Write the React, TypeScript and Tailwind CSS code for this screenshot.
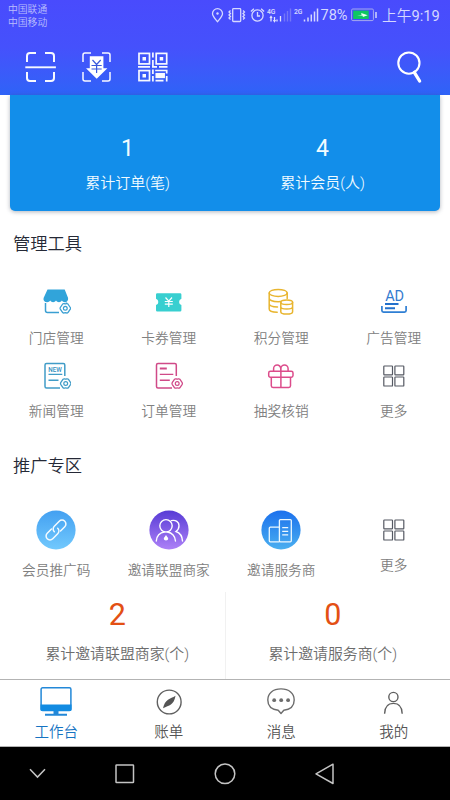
import React from "react";

type IconProps = { children: React.ReactNode; w: number; h: number; className?: string };

function Icon({ children, w, h, className = "" }: IconProps) {
  return (
    <svg width={w} height={h} viewBox={`0 0 ${w} ${h}`} fill="none" className={`block shrink-0 ${className}`}>
      {children}
    </svg>
  );
}

/* Cog badge shown on the lower right of the management icons */
function Cog({ x, y, color }: { x: number; y: number; color: string }) {
  return (
    <g transform={`translate(${x} ${y})`} stroke={color}>
      <path
        d="M-2.6-4.3Q-2-4.9-1-4.6Q0-4.3 1-4.6Q2-4.9 2.6-4.3L5-.8Q5.4 0 5 .8L2.6 4.3Q2 4.9 1 4.6Q0 4.3-1 4.6Q-2 4.9-2.6 4.3L-5 .8Q-5.4 0-5-.8Z"
        fill="#fff"
        strokeWidth="1.3"
        strokeLinejoin="round"
      />
      <circle r="1.9" strokeWidth="1.2" />
    </g>
  );
}

const StoreIcon = () => (
  <Icon w={30} h={30}>
    <path d="M4.5 15v7.5a2 2 0 0 0 2 2H18M25.5 14.5v3" stroke="#3a9fd2" strokeWidth="1.5" />
    <path d="M6.500 1.600h17.200l3.400 8.400c.3 2.600-1.200 4.200-3.200 4.200-1.400 0-2.200-.7-3-1.700-.8 1-1.700 1.700-2.900 1.700s-2.200-.7-3-1.700c-.8 1-1.700 1.700-2.900 1.700s-2.100-.7-2.900-1.700c-.8 1-1.700 1.700-3 1.700C3.500 14.200 2 12.500 2.600 10z" fill="#31a4da" />
    <Cog x={24.3} y={20.3} color="#3a9fd2" />
  </Icon>
);

const CouponIcon = () => (
  <Icon w={30} h={30}>
    <path d="M3.300 5.200h22.800a1.300 1.300 0 0 1 1.300 1.300v4.300a3.300 3.300 0 0 0 0 6.300v5.200a1.300 1.300 0 0 1-1.300 1.300H3.300A1.300 1.300 0 0 1 2 22.300v-5.200a3.300 3.300 0 0 0 0-6.300V6.500a1.300 1.300 0 0 1 1.300-1.300z" fill="#38cfd0" />
    <path d="M11.500 9.500l3.300 3.600L18 9.500M14.800 13.100v6M10.800 13.500h8M10.800 16.100h8" stroke="#fff" strokeWidth="1.200" />
  </Icon>
);

const CoinsIcon = () => (
  <Icon w={30} h={30}>
    <g stroke="#e8b52f" strokeWidth="1.500" strokeLinecap="round">
      <ellipse cx="12.200" cy="4.900" rx="9" ry="3.500" />
      <path d="M3.200 5v16c0 2 3.600 3.200 8 3.300M21.200 5v5.500M3.200 10.300c0 2 4 3.400 9 3.400 1 0 1.700 0 2.500-.1M3.200 15.800c0 1.900 3.500 3.100 8.300 3.200" />
      <ellipse cx="20.700" cy="14.200" rx="5.900" ry="2.300" />
      <path d="M14.800 14.200v9.500c0 1.300 2.600 2.400 5.900 2.400s5.900-1.100 5.900-2.400v-9.500M14.800 18.800c0 1.300 2.600 2.300 5.900 2.300s5.900-1 5.900-2.300" />
    </g>
  </Icon>
);

const AdIcon = () => (
  <Icon w={30} h={30}>
    <text x="15.700" y="12.800" textAnchor="middle" textLength="18.800" fontSize="14.500" fontWeight="400" fill="#347bcf" className="font-['Roboto']">AD</text>
    <path d="M2.900 18v4.600a1.600 1.600 0 0 0 1.600 1.600h21a1.600 1.600 0 0 0 1.600-1.600V18" stroke="#2f7fd4" strokeWidth="1.700" />
    <path d="M6 16h13.500M6 20.200h10" stroke="#2370cc" strokeWidth="2" />
  </Icon>
);

const NewsIcon = () => (
  <Icon w={30} h={30}>
    <path d="M23.800 15V4a1.500 1.500 0 0 0-1.500-1.500H5.500A1.500 1.500 0 0 0 4 4v21.500A1.500 1.500 0 0 0 5.500 27H19" stroke="#419cc7" strokeWidth="1.500" />
    <text x="14.100" y="11" textAnchor="middle" textLength="13.500" lengthAdjust="spacingAndGlyphs" fontSize="7" fontWeight="500" fill="#318fc0" className="font-['Roboto']">NEW</text>
    <path d="M7.500 13.400h13.800M7.500 19.200h10" stroke="#419cc7" strokeWidth="1.400" />
    <Cog x={24.700} y={22.500} color="#419cc7" />
  </Icon>
);

const OrderIcon = () => (
  <Icon w={30} h={30}>
    <path d="M22.300 15V4a1.500 1.500 0 0 0-1.500-1.500H4A1.500 1.500 0 0 0 2.500 4v21.500A1.500 1.500 0 0 0 4 27h14" stroke="#d04a88" strokeWidth="1.500" />
    <path d="M5.800 7.500h7" stroke="#d04a88" strokeWidth="2" />
    <path d="M5.800 13.400h13.500M5.800 19.200h10" stroke="#d04a88" strokeWidth="1.400" />
    <Cog x={23.200} y={22.500} color="#d04a88" />
  </Icon>
);

const GiftIcon = () => (
  <Icon w={30} h={30}>
    <g stroke="#dc4c8b" strokeWidth="1.500" strokeLinejoin="round">
      <rect x="2.700" y="10.300" width="24.300" height="5.900" rx="1.700" />
      <path d="M5.300 16.200v8.500a1.700 1.700 0 0 0 1.700 1.700h15.800a1.700 1.700 0 0 0 1.700-1.700v-8.500M14.900 10.300v16.100M7.600 10V7.700a3.600 3.600 0 0 1 7.200 0V10M14.900 10V7.700a3.600 3.600 0 0 1 7.200 0V10" />
    </g>
  </Icon>
);

const MoreIcon = () => (
  <Icon w={30} h={30}>
    <g stroke="#555963" strokeWidth="1.200">
      <rect x="4.800" y="5" width="8.700" height="8.900" rx=".6" />
      <rect x="15.900" y="5" width="8.900" height="8.900" rx=".6" />
      <rect x="4.800" y="16" width="8.700" height="9" rx=".6" />
      <rect x="15.900" y="16" width="8.900" height="9" rx=".6" />
    </g>
  </Icon>
);

const LinkIcon = () => (
  <Icon w={40} h={40}>
    <defs>
      <linearGradient id="link" x1="0" y1="0" x2="0" y2="1">
        <stop stopColor="#43a0f1" />
        <stop offset="1" stopColor="#72c9fd" />
      </linearGradient>
    </defs>
    <circle cx="20" cy="20" r="19.600" fill="url(#link)" />
    <g transform="rotate(-45 20 20)" stroke="#f4fbff" strokeWidth="1.500" strokeLinecap="round">
      <path d="M17.500 16.100h-6a3.900 3.900 0 0 0-3.900 3.900 3.900 3.900 0 0 0 3.900 3.900h7a3.900 3.900 0 0 0 3.900-3.900" />
      <path d="M22.500 23.900h6a3.900 3.900 0 0 0 3.900-3.900 3.900 3.900 0 0 0-3.900-3.900h-7a3.900 3.900 0 0 0-3.900 3.900" />
    </g>
  </Icon>
);

const AllianceIcon = () => (
  <Icon w={40} h={40}>
    <defs>
      <linearGradient id="alliance" x1="0" y1="0" x2="0" y2="1">
        <stop stopColor="#573bd5" />
        <stop offset="1" stopColor="#ad81f7" />
      </linearGradient>
    </defs>
    <circle cx="20" cy="20" r="19.600" fill="url(#alliance)" />
    <g stroke="#fff" strokeWidth="1.400" strokeLinecap="round">
      <circle cx="17" cy="15.800" r="6.200" />
      <path d="M7.300 31c.2-4.900 3.600-8.600 8-9M18.500 22c4.500.6 7.800 4.200 8 9M22.300 10.600c4.500-1 7.700 1.500 7.700 5.100 0 2.500-1.200 4.500-3 5.800 4 1.500 6.300 5 6.500 9.500" />
    </g>
    <path d="M17 25c.7 1.600 2.200 2.300 2.200 3.600 0 1.100-.9 2-2.200 2s-2.200-.9-2.200-2c0-1.300 1.500-2 2.200-3.600z" fill="#fff" />
  </Icon>
);

const ServiceIcon = () => (
  <Icon w={40} h={40}>
    <defs>
      <linearGradient id="service" x1="0" y1="0" x2="0" y2="1">
        <stop stopColor="#1b70ed" />
        <stop offset="1" stopColor="#4aaff0" />
      </linearGradient>
    </defs>
    <circle cx="20" cy="20" r="19.600" fill="url(#service)" />
    <g stroke="#ecf8ff" strokeWidth="1.300">
      <path d="M18.500 31.800H9.300a1 1 0 0 1-1-1V18.200a1 1 0 0 1 1-1h9.200" />
      <rect x="18.400" y="9.600" width="11.900" height="22.200" rx="1" />
      <path d="M21.200 17.600h6M21.200 21.300h6M21.200 24.800h6" />
    </g>
  </Icon>
);

function Entry({ icon, label }: { icon: React.ReactNode; label: string }) {
  return (
    <div className="flex flex-col items-center">
      {icon}
      <span className="mt-[10px] text-[13.700px] leading-5 whitespace-nowrap text-[#808080]">{label}</span>
    </div>
  );
}

function StatusBar() {
  return (
    <div className="flex h-[31px] items-start pl-2 text-[#d5d8ff]">
      <div className="w-[203px] pt-[3px] text-[9.800px] leading-[13.300px] text-[#bbbffc]">
        <div>中国联通</div>
        <div>中国移动</div>
      </div>
      <Icon w={145} h={30}>
        <g stroke="#d5d8ff" strokeWidth="1.300">
          <path d="M6.500 21.700C3.500 18 1.500 16 1.500 13.700a5 5 0 0 1 10 0c0 2.300-2 4.300-5 8z" />
          <circle cx="6.500" cy="13.500" r="1.200" fill="#d5d8ff" stroke="none" />
          <rect x="21.700" y="8.700" width="8" height="12.800" rx=".8" />
          <path d="M19.500 10.500l-1.500 1.500 1.500 1.500-1.500 1.500 1.500 1.500-1.500 1.500 1.500 1.500M32 10.500l1.500 1.500-1.500 1.500 1.500 1.500-1.500 1.500 1.500 1.500-1.500 1.500" />
          <circle cx="46.500" cy="15.500" r="5.600" />
          <path d="M46.500 12v4h2.500M39.900 11.500l3-2.800M53.100 11.500l-3-2.800" />
        </g>
        <g fill="#d5d8ff" className="font-['Roboto']">
          <text x="56" y="13.600" fontSize="7.500" fontWeight="600" textLength="8.500" lengthAdjust="spacingAndGlyphs">4G</text>
          <text x="83" y="13.600" fontSize="7.500" fontWeight="600" textLength="8.500" lengthAdjust="spacingAndGlyphs">2G</text>
          <text x="109.500" y="20" fontSize="15" fontWeight="400" textLength="27" lengthAdjust="spacingAndGlyphs">78%</text>
        </g>
        <path d="M60 17v4.500M59 18l1-1.500 1 1.500M63.500 17v4.500M62.500 20l1 1.500 1-1.500M66 19.500v2M69.500 16v5.500" stroke="#e0e2ff" strokeWidth="1.300" />
        <path d="M73.500 13.500v8M76.500 11v10.500M79.500 8.500v13" stroke="#7476f7" strokeWidth="1.400" />
        <path d="M93.500 19.500v2M97 17.500v4M100.300 14.500v7M103.500 11.500v10M106.500 8.500v13" stroke="#d5d8ff" strokeWidth="1.500" />
      </Icon>
      <Icon w={26} h={30} className="-ml-[5px]">
        <rect x=".6" y="9" width="21.800" height="11.600" rx="1.200" stroke="#a5a9ee" strokeWidth="1" />
        <rect x="2.200" y="10.600" width="15.500" height="8.400" fill="#0ec662" />
        <path d="M6 15h4.500l-.3-2 6.500 2.200-4.900 1.900v-1.300z" fill="#eafff1" />
        <path d="M25 12v6" stroke="#c9cdfd" strokeWidth="1.600" />
      </Icon>
      <span className="mt-[6px] ml-[5px] text-[14.700px] leading-5 whitespace-nowrap">
        上午<span className="font-normal">9:19</span>
      </span>
    </div>
  );
}

function Toolbar() {
  return (
    <div className="flex h-16 items-start pt-5 pl-[25px]">
      <Icon w={32} h={32}>
        <path d="M2 11V5a3 3 0 0 1 3-3h6M20 2h6a3 3 0 0 1 3 3v6M2 21v6a3 3 0 0 0 3 3h6M20 30h6a3 3 0 0 0 3-3v-6" stroke="#f7f9ff" strokeWidth="2" />
        <path d="M.3 16.300h30.600" stroke="#f7f9ff" strokeWidth="1.900" />
      </Icon>
      <Icon w={32} h={32} className="ml-[24px]">
        <path d="M2 11V4a2 2 0 0 1 2-2h6M21 2h6a2 2 0 0 1 2 2v7M2 21v7a2 2 0 0 0 2 2h6M21 30h6a2 2 0 0 0 2-2v-7" stroke="#f7f9ff" strokeWidth="1.500" />
        <path d="M8.800 5.200h13.600v12h4L15.700 27.800 5 17.200h3.800z" fill="#fff" />
        <path d="M11.500 9l4.100 4.500L19.700 9M15.600 13.500v8.500M10.500 14.500h10.200M10.500 18h10.200" stroke="#3a59dc" strokeWidth="1.200" />
      </Icon>
      <Icon w={32} h={32} className="ml-[24px]">
        <g stroke="#f7f9ff" strokeWidth="1.700">
          <rect x="2" y="2.400" width="10.500" height="10.500" />
          <rect x="19.200" y="2.400" width="10.500" height="10.500" />
          <rect x="2" y="19.600" width="10.500" height="10" />
          <path d="M15.900 1.500v5M15.900 9v6.500M1 15.900h12M15 15.900h5M22 15.900h8.500M15.900 18.500v4.500M15.900 25v5.500M18.200 19.500h11.500v3M29.700 25v5.500M18.500 29.600h8" />
          <rect x="19.300" y="22.800" width="7.800" height="3.500" fill="#f7f9ff" />
        </g>
        <path d="M5.500 5.900h3.500v3.500H5.500zM22.700 5.900h3.500v3.500h-3.500zM5.500 23h3.500v3.500H5.500z" fill="#f7f9ff" />
      </Icon>
      <Icon w={28} h={36} className="ml-[227px]">
        <circle cx="12.900" cy="12.100" r="10.600" stroke="#fff" strokeWidth="2.100" />
        <path d="M18.300 21.300l5.300 8.700" stroke="#fff" strokeWidth="3.300" strokeLinecap="round" />
      </Icon>
    </div>
  );
}

function CardStat({ value, label }: { value: string; label: string }) {
  return (
    <div className="flex w-[195px] flex-col items-center text-[#f1fbff]">
      <span className="mt-[38px] text-[23px] leading-8 font-normal">{value}</span>
      <span className="mt-[8px] text-[15px] leading-5">{label}</span>
    </div>
  );
}

function InviteStat({ value, label }: { value: string; label: string }) {
  return (
    <div className="flex flex-1 flex-col items-center">
      <span className="mt-[5px] text-[30.500px] leading-9 font-normal text-[#e35014]">{value}</span>
      <span className="mt-[11px] text-[14.900px] leading-5 text-[#6c6c6c]">{label}</span>
    </div>
  );
}

function Tab({ icon, label, active = false }: { icon: React.ReactNode; label: string; active?: boolean }) {
  return (
    <div className="flex flex-1 flex-col items-center pt-[5px]">
      {icon}
      <span className={`mt-[4px] text-[14.500px] leading-5 ${active ? "text-[#1673c2]" : "text-[#555]"}`}>{label}</span>
    </div>
  );
}

export default function App() {
  return (
    <div className="flex h-[800px] w-[450px] flex-col overflow-hidden bg-white font-['Roboto','Noto_Sans_CJK_SC',sans-serif] font-[350]">
      <header className="h-[95px] shrink-0 bg-linear-to-b from-[#494bfd] via-[#4551fc] to-[#2e63f7]">
        <StatusBar />
        <Toolbar />
      </header>

      <main className="flex h-[584px] flex-col">
        <section className="mx-[10px] flex h-[116px] shrink-0 justify-center rounded-b-[5px] bg-[#128eea] shadow-[0_1px_4px_rgba(60,70,90,0.4)]">
          <CardStat value="1" label="累计订单(笔)" />
          <CardStat value="4" label="累计会员(人)" />
        </section>

        <h2 className="mt-[21px] ml-[13px] text-[17.300px] leading-6 text-[#252936]">管理工具</h2>
        <section className="mt-[32px] grid grid-cols-4 gap-y-[12.500px]">
          <Entry icon={<StoreIcon />} label="门店管理" />
          <Entry icon={<CouponIcon />} label="卡券管理" />
          <Entry icon={<CoinsIcon />} label="积分管理" />
          <Entry icon={<AdIcon />} label="广告管理" />
          <Entry icon={<NewsIcon />} label="新闻管理" />
          <Entry icon={<OrderIcon />} label="订单管理" />
          <Entry icon={<GiftIcon />} label="抽奖核销" />
          <Entry icon={<MoreIcon />} label="更多" />
        </section>

        <h2 className="mt-[33.500px] ml-[13px] text-[17.300px] leading-6 text-[#252936]">推广专区</h2>
        <section className="mt-[31.500px] grid h-[82px] shrink-0 grid-cols-4">
          <Entry icon={<LinkIcon />} label="会员推广码" />
          <Entry icon={<AllianceIcon />} label="邀请联盟商家" />
          <Entry icon={<ServiceIcon />} label="邀请服务商" />
          <div className="pt-[5px]">
            <Entry icon={<MoreIcon />} label="更多" />
          </div>
        </section>

        <section className="mx-[10px] flex min-h-0 flex-1">
          <InviteStat value="2" label="累计邀请联盟商家(个)" />
          <div className="w-px bg-[#f1f1f1]" />
          <InviteStat value="0" label="累计邀请服务商(个)" />
        </section>
      </main>

      <nav className="flex h-[68px] shrink-0 border-y border-[#b3b3b3]">
        <Tab
          active
          label="工作台"
          icon={
            <Icon w={34} h={34}>
              <rect x="2.100" y="2.800" width="29.800" height="22.800" rx="1.500" stroke="#2388d8" strokeWidth="1.500" />
              <path d="M1.500 19.500h31v5a1.500 1.500 0 0 1-1.500 1.500H3a1.500 1.500 0 0 1-1.500-1.500z" fill="#128be2" />
              <path d="M14.500 26h5v2.700h-5zM6 28.700h22v2H6z" fill="#2388d8" />
            </Icon>
          }
        />
        <Tab
          label="账单"
          icon={
            <Icon w={34} h={34}>
              <circle cx="17.200" cy="17" r="11.900" stroke="#606060" strokeWidth="1.400" />
              <path d="M23.500 10.800c-.7 4.500-2.300 7-4.600 8.600-2 1.400-4.800 2.100-7.900 3.800.9-4.200 2.600-6.800 5-8.500 2.300-1.600 4.800-2 7.500-3.900z" fill="#555" />
            </Icon>
          }
        />
        <Tab
          label="消息"
          icon={
            <Icon w={34} h={34}>
              <path d="M17 3.900c8 0 13.200 4.400 13.200 11 0 6.200-4 9.500-10.400 10.300L17 28.500l-2.800-3.300C7.800 24.400 3.800 21.100 3.800 14.900c0-6.600 5.200-11 13.200-11z" stroke="#6d6d6d" strokeWidth="1.400" strokeLinejoin="round" />
              <g fill="#6d6d6d">
                <circle cx="10.200" cy="15.200" r="1.900" />
                <circle cx="17.200" cy="15.200" r="1.900" />
                <circle cx="24.100" cy="15.200" r="1.900" />
              </g>
            </Icon>
          }
        />
        <Tab
          label="我的"
          icon={
            <Icon w={34} h={34}>
              <g stroke="#606060" strokeWidth="1.400">
                <circle cx="16.400" cy="12" r="4.600" />
                <path d="M7.600 28.700c.1-6.300 3.200-10.300 8.800-10.300s8.700 4 8.800 10.300" />
              </g>
            </Icon>
          }
        />
      </nav>

      <footer className="flex h-[53px] shrink-0 items-center bg-black pl-[25px]">
        {[
          <path key="hide" d="M5 8.300l7.500 7.800L20 8.300" />,
          <rect key="recent" x="4" y="4" width="17.500" height="17.500" rx=".6" />,
          <circle key="home" cx="13" cy="12.800" r="9.800" />,
          <path key="back" d="M21 3.200v19.300L4 12.800z" strokeLinejoin="round" />,
        ].map((shape, i) => (
          <Icon key={i} w={25} h={25} className={["mr-[62px]", "mr-[75px]", "mr-[75px]", ""][i]}>
            <g stroke="#c4c4c4" strokeWidth="1.500">{shape}</g>
          </Icon>
        ))}
      </footer>
    </div>
  );
}
